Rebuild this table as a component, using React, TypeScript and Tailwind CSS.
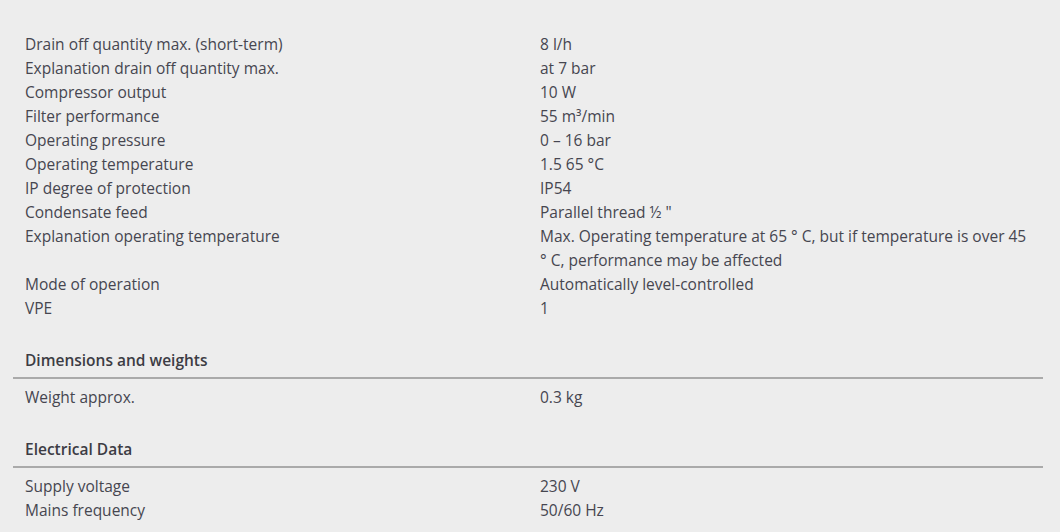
import React from 'react';

type Row = [string, string];

const general: Row[] = [
  ['Drain off quantity max. (short-term)', '8 l/h'],
  ['Explanation drain off quantity max.', 'at 7 bar'],
  ['Compressor output', '10 W'],
  ['Filter performance', '55 m³/min'],
  ['Operating pressure', '0 – 16 bar'],
  ['Operating temperature', '1.5 65 °C'],
  ['IP degree of protection', 'IP54'],
  ['Condensate feed', 'Parallel thread ½ "'],
  ['Explanation operating temperature', 'Max. Operating temperature at 65 ° C, but if temperature is over 45 ° C, performance may be affected'],
  ['Mode of operation', 'Automatically level-controlled'],
  ['VPE', '1'],
];

const sections: { title: string; rows: Row[] }[] = [
  { title: 'Dimensions and weights', rows: [['Weight approx.', '0.3 kg']] },
  { title: 'Electrical Data', rows: [['Supply voltage', '230 V'], ['Mains frequency', '50/60 Hz']] },
];

function SpecRow({ label, value }: { label: string; value: string }) {
  return (
    <div className="grid grid-cols-2">
      <div className="px-3">{label}</div>
      <div className="px-3">{value}</div>
    </div>
  );
}

export default function App() {
  return (
    <div
      className="min-h-[532px] bg-[#ededed] text-[#464650] text-[15.5px] leading-[24px]"
      style={{ fontFamily: '"Open Sans", sans-serif' }}
    >
      <div className="ml-[13px] mr-[17px] pt-8">
        {general.map(([l, v]) => (
          <SpecRow key={l} label={l} value={v} />
        ))}
        {sections.map((s) => (
          <div key={s.title} className="mt-7">
            <div className="px-3 pb-[5px] font-semibold text-[#3c3c44] border-b-2 border-[#aaaaaa]">{s.title}</div>
            <div className="pt-[6px]">
              {s.rows.map(([l, v]) => (
                <SpecRow key={l} label={l} value={v} />
              ))}
            </div>
          </div>
        ))}
      </div>
    </div>
  );
}
